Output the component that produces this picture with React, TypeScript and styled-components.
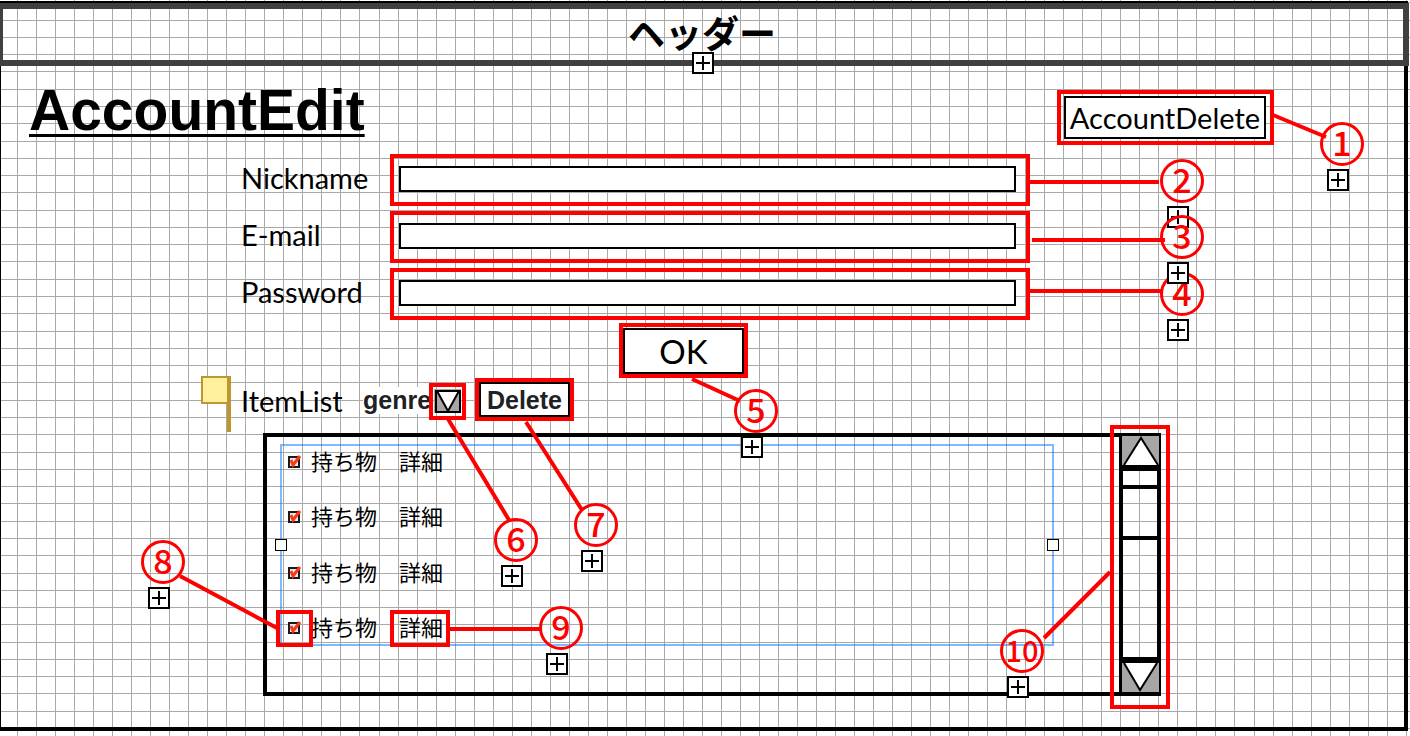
import React from "react";
import styled, { createGlobalStyle } from "styled-components";

const RED = "#ff0000";
const LATIN = `Lato, "Noto Sans CJK JP", sans-serif`;
const ARIAL = `"Liberation Sans", Arial, sans-serif`;
const JP = `"Noto Sans CJK JP", sans-serif`;

const GlobalStyle = createGlobalStyle`
  *, *::before, *::after { box-sizing: border-box; }
  body { margin: 0; background: #fff; color: #000; font-family: ${LATIN}; }
  button, input, select { font: inherit; color: inherit; margin: 0; border-radius: 0; }
`;

const Page = styled.div`
  position: relative;
  min-height: 100vh;
  padding: 1px 2px 0 0;
  overflow: hidden;
  isolation: isolate;
`;

const GridSheet = styled.svg`
  position: absolute;
  inset: 0;
  width: 100%;
  height: 100%;
  z-index: -1;
`;

const Frame = styled.div`
  border: solid #000;
  border-width: 2px 4px 4px 1px;
`;

const Header = styled.header`
  position: relative;
  display: flex;
  justify-content: center;
  height: 63px;
  margin: 0 -5px 0 -1px;
  padding-right: 2px;
  border: solid #404040;
  border-width: 6px 6px 6px 3px;
  font: 700 37px/46px ${JP};
`;

const Main = styled.main`
  max-width: 1273px;
  padding: 12px 0 31px;
`;

const TitleRow = styled.div`
  display: flex;
  justify-content: space-between;
  align-items: flex-start;
  padding-left: 28px;
`;

const Title = styled.h1`
  margin: 0;
  font: 700 57px/64px ${ARIAL};
  text-decoration: underline;
  text-decoration-thickness: 3px;
  text-decoration-skip-ink: none;
  text-underline-offset: 4px;
`;

const Ring = styled.div<{ $pad?: string; $w?: number; $h: number }>`
  display: flex;
  flex: none;
  height: ${(p) => p.$h}px;
  ${(p) => p.$w && `width: ${p.$w}px;`}
  padding: ${(p) => p.$pad ?? "0"};
  border: 4px solid ${RED};
`;

const DeleteAccount = styled(Ring)`
  margin-top: 12px;
`;

const Button = styled.button<{ $size: number; $bold?: boolean }>`
  flex: 1;
  padding: 0;
  border: 2px solid #000;
  background: #fff;
  font-family: ${(p) => (p.$bold ? ARIAL : LATIN)};
  font-size: ${(p) => p.$size}px;
  font-weight: ${(p) => (p.$bold ? 700 : 400)};
  line-height: 32px;
  color: ${(p) => (p.$bold ? "#202124" : "#000")};
  white-space: nowrap;
`;

const Form = styled.form`
  display: flex;
  flex-direction: column;
  gap: 5px;
  margin-top: 9px;
  padding-left: 240px;
`;

const Field = styled.div`
  display: flex;
  align-items: flex-start;
`;

const Label = styled.label`
  width: 149px;
  font-size: 29px;
  line-height: 48px;
`;

const Input = styled.input`
  flex: 1;
  min-width: 0;
  height: 26px;
  padding: 0 4px;
  border: 2px solid #000;
  background: #fff;
  font-size: 16px;
`;

const Submit = styled.div`
  display: flex;
  margin-top: -2px;
  padding-left: 378px;
`;

const ListBar = styled.div`
  position: relative;
  display: flex;
  align-items: center;
  height: 43px;
  padding-left: 240px;
`;

const NoteMark = styled.svg`
  position: absolute;
  left: 200px;
  top: -2px;
`;

const ListTitle = styled.h2`
  width: 122px;
  margin: 0;
  padding-top: 2px;
  font-size: 29px;
  font-weight: 400;
  line-height: 36px;
`;

const GenreLabel = styled.label`
  width: 66px;
  margin-top: 2px;
  background: #fff;
  font: 700 25px/27px ${ARIAL};
  color: #202124;
`;

const GenreRing = styled(Ring)`
  margin: 4px 9px 0 0;
  padding: 2px 0 0 1px;
`;

const GenreSelect = styled.div`
  display: grid;
  width: 27px;
  height: 24px;
  & > * { grid-area: 1 / 1; }
  svg { pointer-events: none; }
  select { appearance: none; width: 27px; height: 24px; border: 0; padding: 0; background: #a6a6a6; }
`;

const ListBox = styled.section`
  display: flex;
  width: 898px;
  height: 263px;
  margin: 12px 0 0 262px;
  border: 4px solid #000;
`;

const Selection = styled.div`
  position: relative;
  width: 774px;
  height: 202px;
  margin: 7px auto 0 13px;
  border: 2px solid rgba(0, 115, 255, 0.5);
`;

const Handle = styled.i<{ $end?: boolean }>`
  position: absolute;
  top: 93px;
  ${(p) => (p.$end ? "right" : "left")}: -7px;
  width: 12px;
  height: 12px;
  border: 1px solid #000;
  background: #fff;
`;

const Items = styled.ul`
  display: flex;
  flex-direction: column;
  justify-content: space-between;
  height: 100%;
  margin: 0;
  padding: 0 0 0 6px;
  list-style: none;
`;

const Item = styled.li`
  display: flex;
  align-items: center;
  height: 32px;
  font: 400 22px/28px ${JP};
`;

const ItemLabel = styled.label`
  display: flex;
  align-items: center;
  gap: 11px;
  margin-right: 22px;
`;

const ItemName = styled.span`
  padding-bottom: 4px;
`;

const Tick = styled.span`
  display: grid;
  width: 12px;
  height: 12px;
  & > * { grid-area: 1 / 1; }
  input { appearance: none; width: 12px; height: 12px; border: 2px solid #1a1a1a; background: #e8e8e8; }
  svg { overflow: visible; pointer-events: none; }
`;

const DetailLink = styled.a`
  padding-bottom: 4px;
  color: inherit;
  text-decoration: none;
`;

const ScrollBar = styled.div`
  display: flex;
  flex-direction: column;
  width: 38px;
  border-left: 4px solid #000;
`;

const ScrollButton = styled.button<{ $down?: boolean }>`
  flex: none;
  display: block;
  height: 35px;
  margin: ${(p) => (p.$down ? "0 -2px 0 -1px" : "-1px -2px 0 -1px")};
  padding: 0;
  border: solid #000;
  border-width: ${(p) => (p.$down ? "6px 0 0" : "0 0 6px")};
  background: #a6a6a6;
  svg { display: block; }
`;

const Thumb = styled.div`
  height: 55px;
  margin-top: 14px;
  border: solid #000;
  border-width: 4px 0;
`;

const Track = styled.div`
  flex: 1;
`;

const Notes = styled.div`
  position: absolute;
  inset: 0;
  pointer-events: none;
`;

const Leaders = styled.svg`
  position: absolute;
  left: 0;
  top: 0;
`;

const Callout = styled.div<{ $x: number; $y: number }>`
  position: absolute;
  left: ${(p) => p.$x}px;
  top: ${(p) => p.$y}px;
  width: 44px;
  display: flex;
  flex-direction: column;
  align-items: center;
  gap: 3px;
  color: ${RED};
`;

const Num = styled.span<{ $wide: boolean }>`
  width: 44px;
  height: 44px;
  border: 3px solid ${RED};
  border-radius: 50%;
  font: 500 ${(p) => (p.$wide ? 29 : 34)}px/34px ${JP};
  text-align: center;
`;

const Plus = styled.svg`
  display: block;
  width: 22px;
  height: 22px;
  margin-right: 8px;
`;

const HeaderPlus = styled.div`
  position: absolute;
  left: 50%;
  top: 43px;
  width: 22px;
  margin-left: -11px;
`;

const verticals = Array.from({ length: 140 }, (_, k) => Math.floor(17.59 + 19.0218 * k));
const horizontals = Array.from({ length: 90 }, (_, k) => Math.floor(2.79 + 17.28 * k));

const fields = [
  { id: "nickname", label: "Nickname", type: "text" },
  { id: "email", label: "E-mail", type: "email" },
  { id: "password", label: "Password", type: "password" },
];

const callouts = [
  { n: 1, x: 1320, y: 122 },
  { n: 2, x: 1160, y: 159 },
  { n: 4, x: 1160, y: 272 },
  { n: 3, x: 1160, y: 215 },
  { n: 5, x: 734, y: 389 },
  { n: 6, x: 494, y: 518 },
  { n: 7, x: 574, y: 503 },
  { n: 8, x: 141, y: 540 },
  { n: 9, x: 539, y: 606 },
  { n: 10, x: 1000, y: 629 },
];

const leaders = [
  [1273, 115, 1326, 137],
  [1030, 182, 1159, 182],
  [1032, 240, 1165, 240],
  [1030, 291, 1162, 291],
  [692, 379, 740, 401],
  [448, 419, 509, 520],
  [526, 422, 582, 510],
  [180, 576, 277, 628],
  [450, 629, 541, 629],
  [1044, 638, 1110, 572],
];

const outlines = [
  [276, 610, 37, 37],
  [390, 610, 60, 37],
  [1110, 425, 60, 284],
];

function PlusBox() {
  return (
    <Plus viewBox="0 0 22 22" aria-hidden="true">
      <rect x="1" y="1" width="20" height="20" fill="#fff" stroke="#000" strokeWidth="2" />
      <path d="M11 4v14M4 11h14" stroke="#000" strokeWidth="2" />
    </Plus>
  );
}

export default function App() {
  return (
    <Page>
      <GlobalStyle />
      <GridSheet aria-hidden="true" fill="#a9a9a9">
        {verticals.map((x) => (
          <rect key={x} x={x} y="0" width="1" height="100%" />
        ))}
        {horizontals.map((y) => (
          <rect key={y} x="0" y={y} width="100%" height="1" />
        ))}
      </GridSheet>
      <Frame>
        <Header>
          ヘッダー
          <HeaderPlus>
            <PlusBox />
          </HeaderPlus>
        </Header>
        <Main>
          <TitleRow>
            <Title>AccountEdit</Title>
            <DeleteAccount $w={217} $h={55} $pad="2px 4px 2px 3px">
              <Button $size={29} type="button">AccountDelete</Button>
            </DeleteAccount>
          </TitleRow>
          <Form onSubmit={(e) => e.preventDefault()}>
            {fields.map((f) => (
              <Field key={f.id}>
                <Label htmlFor={f.id}>{f.label}</Label>
                <Ring $w={640} $h={52} $pad="8px 10px 0 5px">
                  <Input id={f.id} type={f.type} />
                </Ring>
              </Field>
            ))}
            <Submit>
              <Ring $w={129} $h={55} $pad="1px 0 0">
                <Button $size={33} type="submit">OK</Button>
              </Ring>
            </Submit>
          </Form>
          <ListBar>
            <NoteMark width="30" height="56" aria-hidden="true">
              <rect x="1" y="1" width="27" height="26" fill="#fff09e" stroke="#be962f" strokeWidth="2" />
              <rect x="26" y="0" width="4" height="56" fill="#be962f" />
            </NoteMark>
            <ListTitle>ItemList</ListTitle>
            <GenreLabel htmlFor="genre">genre</GenreLabel>
            <GenreRing $w={37} $h={37}>
              <GenreSelect>
                <select id="genre">
                  <option value="" />
                </select>
                <svg width="27" height="24" aria-hidden="true">
                  <path d="M3 2L14 22L25 2Z" fill="#fff" stroke="#000" strokeWidth="2" />
                  <rect x="2" y="2" width="24" height="21" fill="none" stroke="#000" strokeWidth="2" />
                </svg>
              </GenreSelect>
            </GenreRing>
            <Ring $w={99} $h={43}>
              <Button $size={25} $bold type="button">Delete</Button>
            </Ring>
          </ListBar>
          <ListBox>
            <Selection>
              <Items>
                {[0, 1, 2, 3].map((i) => (
                  <Item key={i}>
                    <ItemLabel>
                      <Tick>
                        <input type="checkbox" defaultChecked />
                        <svg width="12" height="12" aria-hidden="true">
                          <path d="M3 4L5 9L12 0" fill="none" stroke="#ff3518" strokeWidth="3" />
                        </svg>
                      </Tick>
                      <ItemName>持ち物</ItemName>
                    </ItemLabel>
                    <DetailLink href="#detail">詳細</DetailLink>
                  </Item>
                ))}
              </Items>
              <Handle />
              <Handle $end />
            </Selection>
            <ScrollBar>
              <ScrollButton type="button" aria-label="Scroll up">
                <svg width="37" height="29">
                  <path d="M2 29L19 2L36 29" fill="#fff" stroke="#000" strokeWidth="2" />
                </svg>
              </ScrollButton>
              <Thumb />
              <Track />
              <ScrollButton $down type="button" aria-label="Scroll down">
                <svg width="37" height="29">
                  <path d="M2 0L18 27L35 0" fill="#fff" stroke="#000" strokeWidth="2" />
                </svg>
              </ScrollButton>
            </ScrollBar>
          </ListBox>
        </Main>
      </Frame>
      <Notes>
        <Leaders width="1410" height="736" fill="none" stroke={RED} strokeWidth="4" aria-hidden="true">
          {leaders.map(([x1, y1, x2, y2]) => (
            <line key={`${x1}-${y1}`} x1={x1} y1={y1} x2={x2} y2={y2} />
          ))}
          {outlines.map(([x, y, w, h]) => (
            <rect key={x} x={x + 2} y={y + 2} width={w - 4} height={h - 4} />
          ))}
        </Leaders>
        {callouts.map((c) => (
          <Callout key={c.n} $x={c.x} $y={c.y}>
            <Num $wide={c.n > 9}>{c.n}</Num>
            <PlusBox />
          </Callout>
        ))}
      </Notes>
    </Page>
  );
}
